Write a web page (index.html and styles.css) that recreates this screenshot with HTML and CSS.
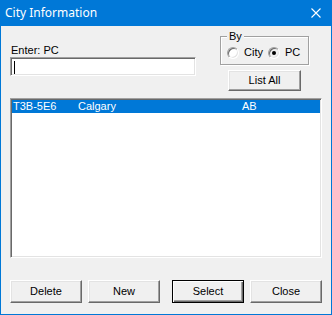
FILE: index.html
```html
<!DOCTYPE html>
<html lang="en">
<head>
    <meta charset="UTF-8" />
    <title>City Information</title>
    <link rel="stylesheet" href="styles.css">
</head>
<body>

    <div class="okno">
        <div class="pasek">
            <span class="tytul">City Information</span>
            <svg class="zamknij" width="10" height="10" viewBox="0 0 10 10">
                <path d="M0.5 0.5 L9.5 9.5 M9.5 0.5 L0.5 9.5" stroke="#ffffff" stroke-width="1.1" fill="none" />
            </svg>
        </div>

        <div class="klient">
            <div class="gora">
                <div class="lewa">
                    <div class="etykieta">Enter: PC</div>
                    <div class="pole"><span class="kursor"></span></div>
                </div>

                <div class="prawa">
                    <div class="grupa">
                        <span class="legenda">By</span>
                        <div class="radia">
                            <span class="radio"></span>
                            <span class="radio-tekst">City</span>
                            <span class="radio zaznaczone"><span class="kropka"></span></span>
                            <span class="radio-tekst">PC</span>
                        </div>
                    </div>
                    <div class="przycisk lista-wszystkie">List All</div>
                </div>
            </div>

            <div class="lista">
                <div class="wiersz wybrany">
                    <span class="kol-kod">T3B-5E6</span>
                    <span class="kol-miasto">Calgary</span>
                    <span class="kol-prow">AB</span>
                </div>
            </div>

            <div class="dol">
                <div class="przycisk">Delete</div>
                <div class="przycisk">New</div>
                <div class="przycisk domyslny">Select</div>
                <div class="przycisk">Close</div>
            </div>
        </div>
    </div>

</body>
</html>
```

FILE: styles.css
```css
body {
    margin: 0;
    background-color: #f0f0f0;
    font-family: "Liberation Sans", Arial, sans-serif;
    font-size: 11px;
    color: #000000;
}

.okno {
    width: 332px;
    height: 315px;
    box-sizing: border-box;
    background-color: #0078d7;
    padding: 0 1px 1px 1px;
    display: flex;
    flex-direction: column;
}

.pasek {
    height: 26px;
    display: flex;
    align-items: center;
    padding: 0 10px 0 4px;
    color: #ffffff;
}

.tytul {
    font-family: "Noto Sans", "Liberation Sans", sans-serif;
    font-size: 12px;
    flex: 1;
    margin-top: -1px;
}

.klient {
    flex: 1;
    background-color: #f0f0f0;
    padding: 0 9px 0 9px;
    display: flex;
    flex-direction: column;
}

.gora {
    display: flex;
    height: 72px;
}

.lewa {
    width: 186px;
    padding-top: 18px;
}

.etykieta {
    height: 13px;
    line-height: 13px;
    padding-left: 1px;
}

.pole {
    height: 19px;
    box-sizing: border-box;
    background-color: #ffffff;
    border: 1px solid;
    border-color: #a0a0a0 #ffffff #ffffff #a0a0a0;
    box-shadow: inset 1px 1px 0 #696969, inset -1px -1px 0 #e3e3e3;
    padding: 3px 0 0 3px;
}

.kursor {
    display: block;
    width: 1px;
    height: 13px;
    background-color: #000000;
}

.prawa {
    margin-left: 24px;
    width: 89px;
}

.grupa {
    margin-top: 10px;
    height: 29px;
    box-sizing: border-box;
    border: 1px solid #a0a0a0;
    box-shadow: inset 1px 1px 0 #ffffff, 1px 1px 0 #ffffff;
}

.legenda {
    display: inline-block;
    margin: -7px 0 0 6px;
    padding: 0 2px;
    height: 13px;
    line-height: 13px;
    background-color: #f0f0f0;
    vertical-align: top;
}

.radia {
    display: flex;
    align-items: center;
    margin-top: -3px;
    padding-left: 6px;
}

.radio {
    width: 12px;
    height: 12px;
    box-sizing: border-box;
    border-radius: 50%;
    border: 1px solid;
    border-color: #a0a0a0 #ffffff #ffffff #a0a0a0;
    box-shadow: inset 1px 1px 0 #696969, inset -1px -1px 0 #e3e3e3;
    background-color: #ffffff;
    display: flex;
    align-items: center;
    justify-content: center;
}

.zaznaczone {
    background-color: #f0f0f0;
}

.kropka {
    width: 4px;
    height: 4px;
    border-radius: 50%;
    background-color: #000000;
}

.radio-tekst {
    margin: 0 5px 0 5px;
    line-height: 13px;
}

.przycisk {
    height: 23px;
    box-sizing: border-box;
    width: 72px;
    border: 1px solid;
    border-color: #ffffff #696969 #696969 #ffffff;
    box-shadow: inset -1px -1px 0 #a0a0a0, inset 1px 1px 0 #e3e3e3;
    background-color: #f0f0f0;
    display: flex;
    align-items: center;
    justify-content: center;
    padding-bottom: 1px;
}

.lista-wszystkie {
    margin: 5px 0 0 8px;
    width: 73px;
    height: 21px;
}

.domyslny {
    border: 1px solid #000000;
    box-shadow: inset 1px 1px 0 #ffffff, inset -1px -1px 0 #696969, inset -2px -2px 0 #a0a0a0;
}

.lista {
    height: 160px;
    box-sizing: border-box;
    background-color: #ffffff;
    border: 1px solid;
    border-color: #a0a0a0 #ffffff #ffffff #a0a0a0;
    box-shadow: inset 1px 1px 0 #696969, inset -1px -1px 0 #e3e3e3;
    padding: 1px;
}

.wiersz {
    height: 13px;
    line-height: 13px;
    display: flex;
    padding-left: 1px;
}

.wybrany {
    background-color: #0078d7;
    color: #ffffff;
}

.kol-kod {
    width: 65px;
}

.kol-miasto {
    width: 164px;
}

.dol {
    display: flex;
    margin-top: 22px;
    gap: 6px;
}

.dol .domyslny {
    margin-left: 6px;
}
```
